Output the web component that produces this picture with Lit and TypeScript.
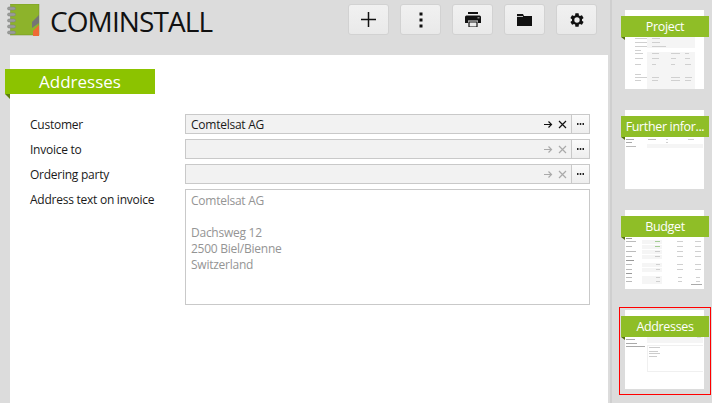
import { LitElement, html, css, svg } from "lit";
import { customElement } from "lit/decorators.js";

const rows = [
  { label: "Customer", value: "Comtelsat AG", on: true },
  { label: "Invoice to", value: "", on: false },
  { label: "Ordering party", value: "", on: false },
];

const b = (x: number, y: number, w: number, h: number, f = "#d0d0d0") =>
  svg`<rect x=${x} y=${y} width=${w} height=${h} fill=${f} />`;

const thumbProject = svg`
  ${b(22, 26, 48, 12, "#f5f5f5")}${b(22, 42, 48, 46, "#f5f5f5")}
  ${b(10, 28, 12, 1)}${b(27, 28, 8, 1)}${b(10, 32, 12, 1)}${b(27, 32, 8, 1)}${b(10, 36, 12, 1)}${b(27, 36, 14, 1)}
  ${b(10, 40, 6, 1)}
  ${b(10, 43, 8, 1)}${b(27, 43, 7, 1)}${b(46, 43, 9, 1)}${b(60, 43, 4, 1)}
  ${b(10, 48, 8, 1)}${b(27, 48, 7, 1)}${b(46, 48, 5, 1)}${b(60, 48, 5, 1)}
  ${b(10, 54, 6, 1)}${b(27, 54, 4, 1)}${b(46, 54, 4, 1)}${b(60, 54, 6, 1)}
  ${b(10, 64, 6, 1)}${b(10, 67, 12, 1)}${b(27, 67, 7, 1)}${b(46, 67, 9, 1)}${b(60, 67, 7, 1)}
  ${b(10, 70, 6, 1)}${b(27, 70, 6, 1)}${b(46, 70, 9, 1)}${b(60, 70, 6, 1)}`;

const thumbFurther = svg`
  ${b(1, 29, 8, 1, "#aaa")}${b(23, 29, 8, 1, "#bbb")}${b(41, 29, 2, 1)}${b(63, 29, 6, 1)}
  ${b(1, 32, 6, 1, "#aaa")}${b(41, 32, 2, 1)}
  ${b(22, 34, 56, 4, "#f5f5f5")}${b(1, 36, 10, 1, "#bbb")}`;

const thumbBudget = svg`
  ${b(1, 28, 6, 1, "#999")}
  ${[31, 36, 41, 46].map((y, i) => svg`
    ${b(17, y - 1, 20, 4, "#f5f5f5")}${b(1, y, i % 2 ? 6 : 10, 1, "#bbb")}
    ${b(30, y, 5, 1, i < 2 ? "#a5cc95" : "#ccc")}${b(52, y, 6, 1)}${b(70, y, 6, 1)}`)}
  ${b(1, 50, 8, 1, "#999")}
  ${[54, 59].map((y) => svg`
    ${b(17, y - 1, 20, 4, "#f5f5f5")}${b(1, y, 6, 1, "#bbb")}${b(31, y, 4, 1)}${b(52, y, 6, 1)}${b(70, y, 6, 1)}`)}
  ${b(1, 63, 6, 1, "#999")}
  ${[67, 71].map((y) => svg`
    ${b(17, y - 1, 20, 4, "#f5f5f5")}${b(1, y, 6, 1, "#bbb")}${b(31, y, 4, 1)}${b(53, y, 4, 1)}${b(71, y, 4, 1)}`)}
  ${b(66, 74, 11, 1, "#aaa")}`;

const thumbAddresses = svg`
  ${b(22, 26, 56, 7, "#f5f5f5")}
  ${b(72, 27, 4, 1, "#ddd")}
  ${b(1, 29, 9, 1, "#aaa")}${b(1, 33, 11, 1, "#aaa")}${b(1, 36, 19, 1, "#aaa")}
  ${b(22, 35, 56, 1, "#f0f0f0")}${b(22, 35, 1, 26, "#f0f0f0")}${b(22, 61, 56, 1, "#f0f0f0")}
  ${b(24, 37, 11, 1, "#ccc")}${b(24, 41, 9, 1, "#ccc")}${b(24, 43, 11, 1, "#ccc")}${b(24, 46, 8, 1, "#ccc")}`;

const thumbs = [
  { title: "Project", art: thumbProject, selected: false },
  { title: "Further infor...", art: thumbFurther, selected: false },
  { title: "Budget", art: thumbBudget, selected: false },
  { title: "Addresses", art: thumbAddresses, selected: true },
];

@customElement("app-root")
export class AppRoot extends LitElement {
  static styles = css`
    :host {
      display: block;
      width: 712px;
      height: 403px;
      overflow: hidden;
      background: #dcdcdc;
      font-family: "Open Sans", "Noto Sans", sans-serif;
      font-size: 12px;
      letter-spacing: -0.25px;
      color: #1a1a1a;
    }
    .root { display: flex; height: 403px; }
    .main { width: 608px; flex: none; display: flex; flex-direction: column; }
    .header { height: 55px; flex: none; display: flex; align-items: flex-start; }
    .logo { display: block; margin: 4px 0 0 7px; flex: none; }
    .title {
      margin: 3px 0 0 10px;
      font-size: 28px;
      line-height: 36px;
      color: #111;
      flex: 1;
      letter-spacing: -0.9px;
    }
    .tools { display: flex; gap: 11px; margin: 4px 11px 0 0; }
    .tool {
      width: 41px;
      height: 31px;
      box-sizing: border-box;
      border: 1px solid #d2d2d2;
      border-radius: 3px;
      background: linear-gradient(#f1f1f1, #e9e9e9);
      display: flex;
      align-items: center;
      justify-content: center;
    }
    .panel {
      flex: 1;
      margin-left: 10px;
      background: #fff;
      position: relative;
      padding: 59px 18px 0 20px;
    }
    .banner {
      position: absolute;
      left: -5px;
      top: 14px;
      width: 150px;
      height: 25px;
      background: #8cc300;
      color: #fff;
      font-size: 17px;
      letter-spacing: 0;
      line-height: 25px;
      padding-left: 34px;
      box-sizing: border-box;
    }
    .banner::after {
      content: "";
      position: absolute;
      left: 0;
      top: 25px;
      border-top: 5px solid #5d7f0c;
      border-left: 5px solid transparent;
    }
    .form {
      display: grid;
      grid-template-columns: 155px 1fr;
      grid-auto-rows: 20px;
      row-gap: 5px;
    }
    .label { line-height: 22px; white-space: nowrap; }
    .field {
      box-sizing: border-box;
      border: 1px solid #c9c9c9;
      background: #f2f2f2;
      display: flex;
      align-items: stretch;
      height: 20px;
    }
    .value { flex: 1; padding-left: 5px; line-height: 20px; }
    .acts { display: flex; align-items: center; gap: 5px; padding-right: 4px; }
    .more {
      width: 17px;
      border-left: 1px solid #c9c9c9;
      background: linear-gradient(#fbfbfb, #eeeeee);
      display: flex;
      align-items: center;
      justify-content: center;
    }
    .area {
      box-sizing: border-box;
      height: 116px;
      border: 1px solid #c9c9c9;
      padding: 3px 5px;
      color: #949494;
      line-height: 16px;
      white-space: pre-line;
    }
    .side {
      flex: none;
      box-sizing: border-box;
      border-left: 2px solid #cfcfcf;
      margin-left: 2px;
      width: 102px;
      padding: 10px 0 0 13px;
      display: flex;
      flex-direction: column;
      gap: 21px;
    }
    .thumb {
      position: relative;
      width: 79px;
      height: 79px;
      background: #fff;
    }
    .thumb svg { display: block; }
    .tag {
      position: absolute;
      left: -4px;
      top: 6px;
      width: 88px;
      height: 21px;
      background: #8fbe27;
      color: #fff;
      font-size: 12.500px;
      letter-spacing: -0.35px;
      line-height: 21px;
      text-align: center;
      white-space: nowrap;
    }
    .tag::after {
      content: "";
      position: absolute;
      left: 0;
      top: 21px;
      border-top: 3px solid #54700f;
      border-left: 4px solid transparent;
    }
    .sel {
      position: absolute;
      left: -6px;
      top: -3px;
      width: 92px;
      height: 88px;
      box-sizing: border-box;
      border: 1px solid #f00;
      pointer-events: none;
    }
  `;

  private arrow(c: string) {
    return html`<svg width="9" height="9" viewBox="0 0 9 9" fill="none" stroke=${c} stroke-width="1.2"><path d="M0 4.500h7.500M4.500 1.500l3 3-3 3"/></svg>`;
  }
  private cross(c: string) {
    return html`<svg width="9" height="9" viewBox="0 0 9 9" fill="none" stroke=${c} stroke-width="1.2"><path d="M1 1l7 7M8 1l-7 7"/></svg>`;
  }

  render() {
    return html`
      <div class="root">
        <div class="main">
          <div class="header">
            <svg class="logo" width="33" height="33" viewBox="0 0 33 33">
              <rect x="3.500" y="0" width="28.500" height="31" fill="#8db32b" stroke="#6f8f23" stroke-width="0.5"/>
              <path d="M32 11L25 18V24L32 19Z" fill="#757575"/>
              <path d="M32 21L26 27V32H32Z" fill="#ee6a35"/>
              ${[3, 9, 15, 21, 27].map(
                (y) => svg`<rect x="0.500" y=${y} width="8" height="3" rx="1.500" fill="#9a9c9a" stroke="#7c7e7c" stroke-width="0.5"/>`
              )}
            </svg>
            <div class="title">COMINSTALL</div>
            <div class="tools">
              <div class="tool">
                <svg width="15" height="15" viewBox="0 0 15 15"><path d="M7.500 0v15M0 7.500h15" stroke="#111" stroke-width="1.500"/></svg>
              </div>
              <div class="tool">
                <svg width="4" height="16" viewBox="0 0 4 16" fill="#111"><rect x="0.500" y="0.500" width="3" height="3"/><rect x="0.500" y="6.500" width="3" height="3"/><rect x="0.500" y="12.500" width="3" height="3"/></svg>
              </div>
              <div class="tool">
                <svg width="16" height="15" viewBox="0 0 16 15" fill="#111">
                  <rect x="3" y="0" width="10" height="2"/>
                  <path d="M1.500 3.500h13A1.500 1.500 0 0 1 16 5v6h-3V8.500H3V11H0V5a1.500 1.500 0 0 1 1.500-1.500Z"/>
                  <path d="M4 10h8v5H4z" fill="none" stroke="#111" stroke-width="1.200"/>
                  <rect x="12.500" y="5" width="2" height="1.500" fill="#888"/>
                </svg>
              </div>
              <div class="tool">
                <svg width="15" height="12" viewBox="0 0 15 12" fill="#111"><path d="M0 0h6l1 2h8v10H0Z"/><rect x="0" y="2" width="6" height="0.800" fill="#eee"/></svg>
              </div>
              <div class="tool">
                <svg width="16" height="16" viewBox="0 0 24 24" fill="#111"><path d="M19.430 12.980c.04-.32.070-.64.070-.98s-.03-.66-.07-.98l2.110-1.650c.19-.15.240-.42.120-.64l-2-3.460c-.12-.22-.39-.3-.61-.22l-2.490 1c-.52-.4-1.080-.73-1.690-.98l-.38-2.650A.49.49 0 0 0 14 2h-4c-.25 0-.46.18-.49.420l-.38 2.650c-.61.25-1.170.59-1.690.98l-2.490-1c-.23-.09-.49 0-.61.22l-2 3.460c-.13.22-.07.49.12.64l2.110 1.650c-.04.32-.07.65-.07.98s.03.66.07.98l-2.110 1.650c-.19.15-.24.42-.12.64l2 3.460c.12.22.39.3.61.22l2.490-1c.52.4 1.080.73 1.690.98l.38 2.650c.03.24.24.42.49.42h4c.25 0 .46-.18.49-.42l.38-2.650c.61-.25 1.170-.59 1.690-.98l2.490 1c.23.09.49 0 .61-.22l2-3.460c.12-.22.07-.49-.12-.64l-2.110-1.650ZM12 16a4 4 0 1 1 0-8 4 4 0 0 1 0 8Z"/></svg>
              </div>
            </div>
          </div>
          <div class="panel">
            <div class="banner">Addresses</div>
            <div class="form">
              ${rows.map(
                (r) => html`
                  <div class="label">${r.label}</div>
                  <div class="field">
                    <div class="value">${r.value}</div>
                    <div class="acts">
                      ${this.arrow(r.on ? "#111" : "#aaa")}${this.cross(r.on ? "#111" : "#aaa")}
                    </div>
                    <div class="more">
                      <svg width="7" height="2" viewBox="0 0 7 2" fill="#222"><rect width="1.500" height="2"/><rect x="2.750" width="1.500" height="2"/><rect x="5.500" width="1.500" height="2"/></svg>
                    </div>
                  </div>
                `
              )}
              <div class="label">Address text on invoice</div>
              <div class="area">Comtelsat AG

Dachsweg 12
2500 Biel/Bienne
Switzerland</div>
            </div>
          </div>
        </div>
        <div class="side">
          ${thumbs.map(
            (t) => html`
              <div class="thumb">
                <svg width="79" height="79" viewBox="0 0 79 79">${t.art}</svg>
                <div class="tag">${t.title}</div>
                ${t.selected ? html`<div class="sel"></div>` : ""}
              </div>
            `
          )}
        </div>
      </div>
    `;
  }
}
